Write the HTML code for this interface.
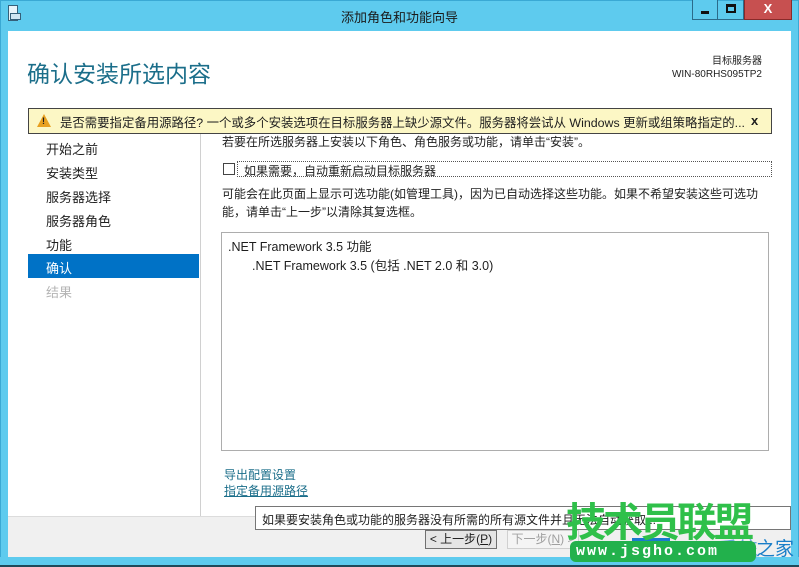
<!DOCTYPE html>
<html><head><meta charset="utf-8"><style>
*{margin:0;padding:0;box-sizing:border-box}
body{width:799px;height:567px;overflow:hidden;background:#5ecbee;font-family:"Liberation Sans","Noto Sans CJK SC",sans-serif;position:relative;color:#1e1e1e}
.abs{position:absolute}
.t{font-size:12px;white-space:nowrap}
</style></head><body>
<div class="abs" style="left:0;top:0;width:799px;height:567px;border:1px solid #3aa9d4"></div>
<div class="abs" style="left:8px;top:5px;width:10px;height:16px;border:1px solid #35607a;background:#e8f4fa"></div>
<div class="abs" style="left:10px;top:13px;width:11px;height:7px;border:1px solid #35607a;background:#cfe6f2"></div>
<div class="abs t" style="left:0;width:799px;top:7px;text-align:center;font-size:13px;color:#1a1a1a">添加角色和功能向导</div>
<div class="abs" style="left:692px;top:0;width:26px;height:20px;background:#5ecbee;border:1px solid #2b6b8a;border-top:none"></div>
<div class="abs" style="left:701px;top:11px;width:8px;height:3px;background:#111"></div>
<div class="abs" style="left:718px;top:0;width:26px;height:20px;border:1px solid #2b6b8a;border-top:none;border-left:none"></div>
<div class="abs" style="left:726px;top:4px;width:10px;height:9px;border:2px solid #111;border-top-width:3px"></div>
<div class="abs" style="left:744px;top:0;width:48px;height:20px;background:#c75050;border:1px solid #8a2a2a;border-top:none;color:#fff;font-weight:bold;font-size:13px;text-align:center;line-height:18px">X</div>
<div class="abs" style="left:8px;top:31px;width:783px;height:485px;background:#fff"></div>
<div class="abs" style="left:8px;top:516px;width:783px;height:41px;background:#f0f0f0;border-top:1px solid #dcdcdc"></div>
<div class="abs" style="left:0;top:557px;width:799px;height:10px;background:#5ecbee;border-bottom:2px solid #1f4a5a"></div>
<div class="abs t" style="left:27px;top:55px;font-size:23px;color:#1b6e8a">确认安装所选内容</div>
<div class="abs t" style="right:37px;top:55px;font-size:10px;text-align:right;line-height:13px">目标服务器<br>WIN-80RHS095TP2</div>
<div class="abs" style="left:28px;top:108px;width:744px;height:26px;background:#fcf7c5;border:1px solid #444"></div>
<div class="abs" style="left:37px;top:114px;width:0;height:0;border-left:7px solid transparent;border-right:7px solid transparent;border-bottom:13px solid #e8a020"></div>
<div class="abs t" style="left:42px;top:116px;font-size:9px;font-weight:bold">!</div>
<div class="abs t" style="left:60px;top:113px;font-size:12.4px">是否需要指定备用源路径? 一个或多个安装选项在目标服务器上缺少源文件。服务器将尝试从 Windows 更新或组策略指定的...</div>
<div class="abs t" style="left:751px;top:113px;font-weight:bold;font-size:13px">x</div>
<div class="abs t" style="left:46px;top:138px;font-size:13px;line-height:24px">开始之前<br>安装类型<br>服务器选择<br>服务器角色<br>功能</div>
<div class="abs" style="left:28px;top:254px;width:171px;height:24px;background:#0072c6"></div>
<div class="abs t" style="left:46px;top:258px;font-size:13px;color:#fff">确认</div>
<div class="abs t" style="left:46px;top:282px;font-size:13px;color:#b4b4b4">结果</div>
<div class="abs" style="left:200px;top:134px;width:1px;height:382px;background:#d0d0d0"></div>
<div class="abs t" style="left:222px;top:133px">若要在所选服务器上安装以下角色、角色服务或功能，请单击“安装”。</div>
<div class="abs" style="left:223px;top:163px;width:12px;height:12px;border:1px solid #444;background:#fff"></div>
<div class="abs" style="left:237px;top:161px;width:535px;height:16px;border:1px dotted #555"></div>
<div class="abs t" style="left:244px;top:162px">如果需要，自动重新启动目标服务器</div>
<div class="abs t" style="left:222px;top:185px;line-height:18px">可能会在此页面上显示可选功能(如管理工具)，因为已自动选择这些功能。如果不希望安装这些可选功<br>能，请单击“上一步”以清除其复选框。</div>
<div class="abs" style="left:221px;top:232px;width:548px;height:219px;border:1px solid #adadad"></div>
<div class="abs t" style="left:228px;top:236px;font-size:12.5px">.NET Framework 3.5 功能</div>
<div class="abs t" style="left:252px;top:255px;font-size:12.5px">.NET Framework 3.5 (包括 .NET 2.0 和 3.0)</div>
<div class="abs t" style="left:224px;top:466px;color:#1b6e8a">导出配置设置</div>
<div class="abs t" style="left:224px;top:482px;color:#1b6e8a;text-decoration:underline">指定备用源路径</div>
<div class="abs" style="left:255px;top:506px;width:536px;height:24px;background:#fff;border:1px solid #767676"></div>
<div class="abs t" style="left:262px;top:511px">如果要安装角色或功能的服务器没有所需的所有源文件并且无法自动获取...</div>
<div class="abs t" style="left:425px;top:530px;width:72px;height:19px;border:1px solid #707070;background:#e5e5e5;text-align:center;line-height:17px">&lt; 上一步(<u>P</u>)</div>
<div class="abs t" style="left:507px;top:530px;width:72px;height:19px;border:1px solid #d0d0d0;background:#f4f4f4;color:#a0a0a0;text-align:center;line-height:17px">下一步(<u>N</u>) &gt;</div>
<div class="abs" style="left:632px;top:538px;width:38px;height:19px;background:#1a7ad0"></div>
<div class="abs t" style="left:672px;top:533px;font-size:20px;color:#6aa6dc">Win8系统</div>
<div class="abs t" style="left:566px;top:490px;font-size:40px;font-weight:bold;color:#2fc04a;letter-spacing:-3px">技术员联盟</div>
<div class="abs t" style="left:570px;top:541px;width:186px;height:21px;background:#22b14c;border-radius:6px;color:#fff;font-size:15px;font-weight:bold;padding-left:6px;line-height:21px;letter-spacing:2px;font-family:'Liberation Mono',monospace">www.jsgho.com</div>
<div class="abs t" style="left:756px;top:534px;font-size:19px;color:#1a7ec8">之家</div>
</body></html>
